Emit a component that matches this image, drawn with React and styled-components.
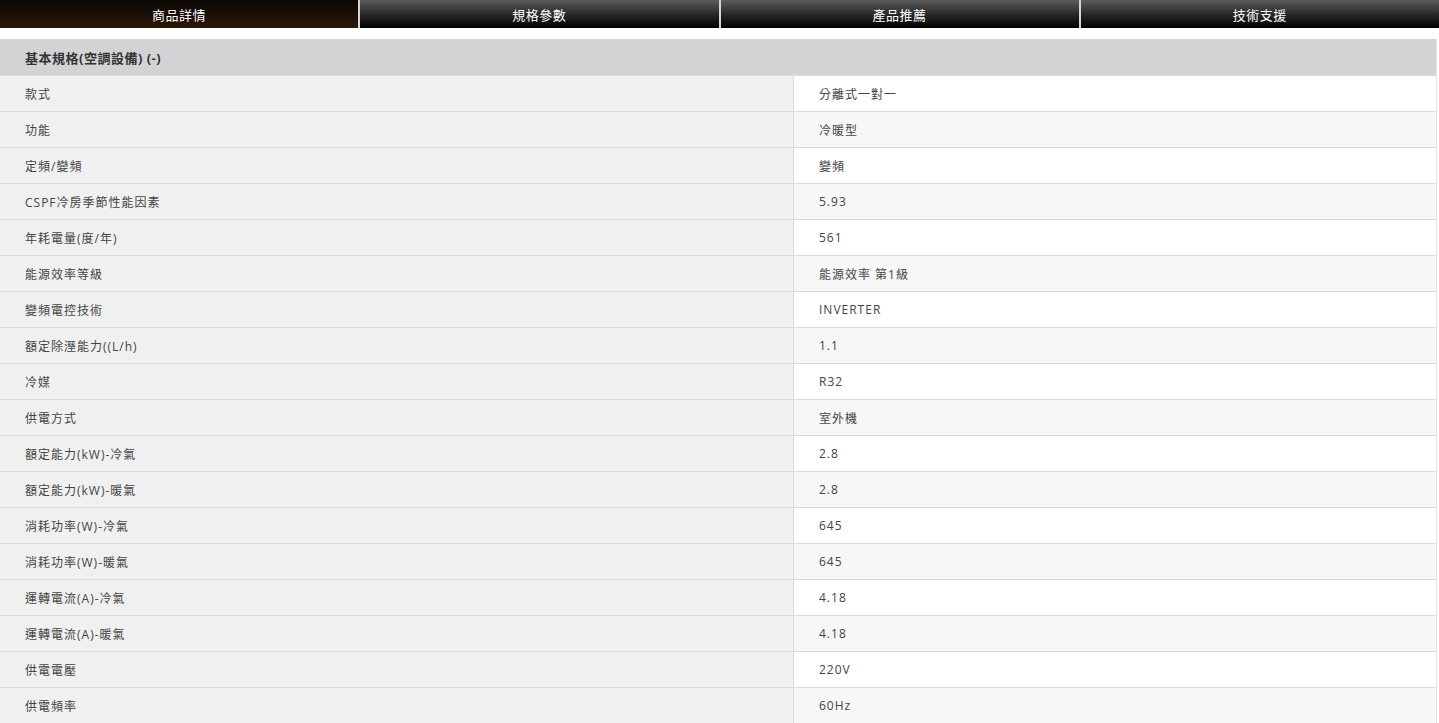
import React from "react";
import styled, { createGlobalStyle } from "styled-components";

const GlobalStyle = createGlobalStyle`
  html, body { margin: 0; padding: 0; background: #fff; }
  body {
    font-family: "Open Sans", "Noto Sans CJK TC", sans-serif;
    color: #333;
  }
`;

const TabBar = styled.div`
  display: flex;
  height: 28px;
  background: #fff;
`;

const Tab = styled.div`
  flex: 1;
  display: flex;
  align-items: center;
  justify-content: center;
  color: #fff;
  font-size: 13px;
  letter-spacing: 0.5px;
  background: ${(p) =>
    p.$active
      ? "linear-gradient(to bottom, #0b0806 0%, #1c0f06 55%, #2e1707 100%)"
      : "linear-gradient(to bottom, #5c5c5c 0%, #2a2a2a 50%, #000 100%)"};
  border-left: ${(p) => (p.$first ? "0" : "2px solid #d6d6d6")};
  cursor: pointer;
`;

const Table = styled.div`
  margin-top: 11px;
  width: 1437px;
  border-right: 1px solid #e4e4e4;
  box-sizing: border-box;
`;

const Head = styled.div`
  height: 36px;
  display: flex;
  align-items: center;
  padding-left: 25px;
  background: #d3d3d5;
  font-size: 13px;
  font-weight: 700;
  letter-spacing: 0.5px;
  color: #333;
`;

const Row = styled.div`
  display: grid;
  grid-template-columns: 794px 1fr;
  height: 36px;
  border-top: 1px solid #dcdcdc;
  box-sizing: border-box;
`;

const Label = styled.div`
  display: flex;
  align-items: center;
  padding-left: 25px;
  background: #f0f0f0;
  border-right: 1px solid #dcdcdc;
  font-size: 12px;
  letter-spacing: 1px;
  color: #444;
`;

const Value = styled.div`
  display: flex;
  align-items: center;
  padding-left: 25px;
  background: ${(p) => (p.$alt ? "#f7f7f7" : "#fff")};
  font-size: 12px;
  letter-spacing: 1px;
  color: #444;
`;

const tabs = ["商品詳情", "規格參數", "產品推薦", "技術支援"];

const specs = [
  ["款式", "分離式一對一"],
  ["功能", "冷暖型"],
  ["定頻/變頻", "變頻"],
  ["CSPF冷房季節性能因素", "5.93"],
  ["年耗電量(度/年)", "561"],
  ["能源效率等級", "能源效率 第1級"],
  ["變頻電控技術", "INVERTER"],
  ["額定除溼能力((L/h)", "1.1"],
  ["冷媒", "R32"],
  ["供電方式", "室外機"],
  ["額定能力(kW)-冷氣", "2.8"],
  ["額定能力(kW)-暖氣", "2.8"],
  ["消耗功率(W)-冷氣", "645"],
  ["消耗功率(W)-暖氣", "645"],
  ["運轉電流(A)-冷氣", "4.18"],
  ["運轉電流(A)-暖氣", "4.18"],
  ["供電電壓", "220V"],
  ["供電頻率", "60Hz"],
];

export default function App() {
  return (
    <>
      <GlobalStyle />
      <TabBar>
        {tabs.map((t, i) => (
          <Tab key={t} $active={i === 0} $first={i === 0}>
            {t}
          </Tab>
        ))}
      </TabBar>
      <Table>
        <Head>基本規格(空調設備) (-)</Head>
        {specs.map(([k, v], i) => (
          <Row key={k}>
            <Label>{k}</Label>
            <Value $alt={i % 2 === 1}>{v}</Value>
          </Row>
        ))}
      </Table>
    </>
  );
}
